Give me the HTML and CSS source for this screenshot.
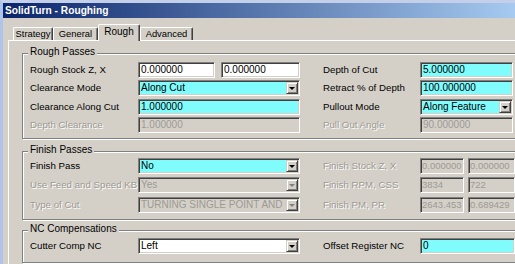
FILE: index.html
```html
<!DOCTYPE html>
<html lang="en">
<head>
  <meta charset="UTF-8" />
  <title>SolidTurn - Roughing</title>
  <link rel="stylesheet" href="styles.css">
</head>
<body>
  <div class="window">
    <div class="titlebar">SolidTurn - Roughing</div>
    <div class="client">
      <div class="tabs">
        <div class="tab tab-strategy">Strategy</div>
        <div class="tab tab-general">General</div>
        <div class="tab tab-rough active">Rough</div>
        <div class="tab tab-advanced">Advanced</div>
      </div>

      <div class="panel">
        <div class="group group-rough">
          <span class="legend">Rough Passes</span>
          <div class="grid">
            <div class="label">Rough Stock Z, X</div>
            <div class="pair">
              <div class="field w-a">0.000000</div>
              <div class="field w-b">0.000000</div>
            </div>
            <div class="label right">Depth of Cut</div>
            <div class="field cyan w-r">5.000000</div>

            <div class="label">Clearance Mode</div>
            <div class="field cyan combo">Along Cut<span class="btn"></span></div>
            <div class="label right">Retract % of Depth</div>
            <div class="field cyan w-r">100.000000</div>

            <div class="label">Clearance Along Cut</div>
            <div class="field cyan">1.000000</div>
            <div class="label right">Pullout Mode</div>
            <div class="field cyan combo w-r">Along Feature<span class="btn"></span></div>

            <div class="label off">Depth Clearance</div>
            <div class="field off">1.000000</div>
            <div class="label right off">Pull Out Angle</div>
            <div class="field off w-r">90.000000</div>
          </div>
        </div>

        <div class="group group-finish">
          <span class="legend">Finish Passes</span>
          <div class="grid">
            <div class="label">Finish Pass</div>
            <div class="field cyan combo">No<span class="btn"></span></div>
            <div class="label right off">Finish Stock Z, X</div>
            <div class="pair small">
              <div class="field off w-c">0.000000</div>
              <div class="field off w-d">0.000000</div>
            </div>

            <div class="label off">Use Feed and Speed KB</div>
            <div class="field off combo">Yes<span class="btn"></span></div>
            <div class="label right off">Finish RPM, CSS</div>
            <div class="pair small">
              <div class="field off w-c">3834</div>
              <div class="field off w-d">722</div>
            </div>

            <div class="label off">Type of Cut</div>
            <div class="field off combo">TURNING SINGLE POINT AND I<span class="btn"></span></div>
            <div class="label right off">Finish PM, PR</div>
            <div class="pair small">
              <div class="field off w-c">2643.453</div>
              <div class="field off w-d">0.689429</div>
            </div>
          </div>
        </div>

        <div class="group group-nc">
          <span class="legend">NC Compensations</span>
          <div class="grid">
            <div class="label">Cutter Comp NC</div>
            <div class="field combo">Left<span class="btn"></span></div>
            <div class="label right">Offset Register NC</div>
            <div class="field cyan">0</div>
          </div>
        </div>
      </div>
    </div>
  </div>
</body>
</html>
```

FILE: styles.css
```css
html, body {
  margin: 0;
  width: 515px;
  height: 264px;
  overflow: hidden;
}
body {
  font-family: 'Liberation Sans', Arial, sans-serif;
  font-size: 10px;
  color: #000;
  background: #d4d0c8;
}
.window {
  width: 512px;
  height: 261px;
  overflow: hidden;
  border-top: 3px solid #c4d0ea;
  border-left: 3px solid #b0c4ea;
  background: #d4d0c8;
}
.titlebar {
  height: 15px;
  line-height: 15px;
  padding-left: 2px;
  color: #fff;
  font-weight: bold;
  font-size: 10.2px;
  background: linear-gradient(to right, #0a246a, #a6caf0);
}
.client {
  padding: 6px 0 0 5px;
}

/* tabs */
.tabs {
  display: flex;
  align-items: flex-end;
  height: 16px;
  margin-left: 5px;
  position: relative;
  z-index: 1;
  font-size: 9.4px;
}
.tab {
  box-sizing: border-box;
  height: 13px;
  line-height: 12px;
  text-align: center;
  border: 1px solid #fff;
  border-right-color: #404040;
  border-bottom: none;
  border-radius: 2px 2px 0 0;
  box-shadow: inset -1px 0 0 #808080;
  background: #d4d0c8;
}
.tab.active {
  height: 17px;
  line-height: 13px;
  margin-bottom: -1px;
  font-size: 10px;
}
.tab-strategy { width: 40px; }
.tab-general { width: 45px; }
.tab-rough { width: 42px; }
.tab-advanced { width: 53px; }

.panel {
  border-top: 1px solid #fff;
  border-left: 1px solid #fff;
  padding: 12px 0 0 13px;
  height: 220px;
}

/* group boxes */
.group {
  position: relative;
  width: 560px;
  border: 1px solid #808080;
  box-shadow: inset 1px 1px 0 #fff, 1px 1px 0 #fff;
  padding: 8px 0 5px 7px;
}
.group-finish {
  margin-top: 12px;
  padding-top: 6px;
  padding-bottom: 6px;
}
.group-nc {
  margin-top: 10px;
  padding-top: 7px;
  padding-bottom: 8px;
}
.legend {
  position: absolute;
  top: -8px;
  left: 5px;
  padding: 0 2px;
  line-height: 12px;
  background: #d4d0c8;
}

.grid {
  display: grid;
  grid-template-columns: 108px 162px 120px 95px;
  grid-auto-rows: 16px;
}
.group-rough .grid { row-gap: 2.33px; }
.group-finish .grid { row-gap: 3.5px; }

.label {
  line-height: 16px;
  white-space: nowrap;
  font-size: 9.7px;
}
.label.right { padding-left: 23px; }
.label.off {
  color: #9d9a93;
  text-shadow: 1px 1px 0 #fff;
}

/* fields */
.field {
  position: relative;
  box-sizing: border-box;
  height: 16px;
  line-height: 14px;
  padding-left: 2px;
  border: 1px solid;
  border-color: #808080 #fff #fff #808080;
  box-shadow: inset 1px 1px 0 #404040, inset -1px -1px 0 #d4d0c8;
  background: #fff;
  white-space: nowrap;
  overflow: hidden;
}
.field.cyan { background: #80fcfc; }
.field.off {
  background: #d4d0c8;
  color: #9d9a93;
}
.w-a { width: 77px; }
.w-b { width: 79px; }
.w-r { width: 93px; }
.w-c { width: 44px; }
.w-d { width: 47px; }

.pair {
  display: flex;
  gap: 6px;
}
.pair.small { gap: 4px; }
.pair.small .field {
  padding-left: 1px;
  font-size: 9.5px;
}

.btn {
  position: absolute;
  top: 1px;
  right: 1px;
  bottom: 1px;
  width: 12px;
  box-sizing: border-box;
  background: #d4d0c8;
  border: 1px solid;
  border-color: #d4d0c8 #404040 #404040 #d4d0c8;
  box-shadow: inset 1px 1px 0 #fff, inset -1px -1px 0 #808080;
}
.btn::after {
  content: '';
  position: absolute;
  left: 2px;
  top: 4px;
  border-left: 3px solid transparent;
  border-right: 3px solid transparent;
  border-top: 3px solid #000;
}
.field.off .btn::after {
  border-top-color: #808080;
}
```
